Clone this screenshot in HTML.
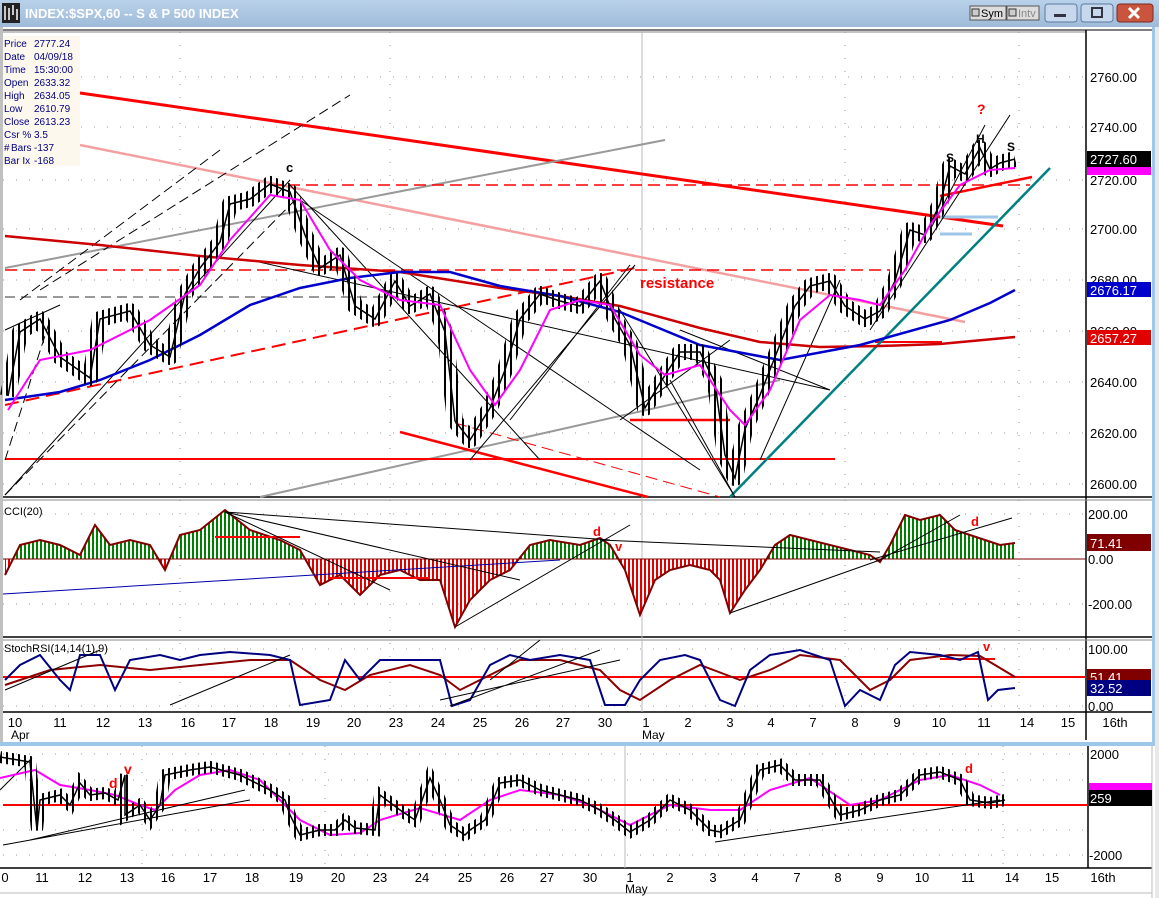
<!DOCTYPE html><html><head><meta charset="utf-8"><style>
body{margin:0;width:1159px;height:898px;overflow:hidden;background:#fff;font-family:"Liberation Sans",sans-serif}
svg{display:block}
</style></head><body>
<svg width="1159" height="898" viewBox="0 0 1159 898" xmlns="http://www.w3.org/2000/svg" font-family="Liberation Sans, sans-serif">
<defs>
<linearGradient id="tb" x1="0" y1="0" x2="0" y2="1"><stop offset="0" stop-color="#b9d1ea"/><stop offset="1" stop-color="#9fbbd9"/></linearGradient>
<pattern id="bars" width="6" height="20" patternUnits="userSpaceOnUse"><rect x="0" y="0" width="2" height="20" fill="#000"/></pattern>
<pattern id="gp" width="4" height="10" patternUnits="userSpaceOnUse"><rect width="2" height="10" fill="#008000"/></pattern>
<pattern id="rp" width="4" height="10" patternUnits="userSpaceOnUse"><rect width="2" height="10" fill="#e00000"/></pattern>
<clipPath id="cAbove"><rect x="0" y="490" width="1086" height="69"/></clipPath>
<clipPath id="cBelow"><rect x="0" y="559" width="1086" height="80"/></clipPath>
</defs>
<rect width="1159" height="898" fill="#fff"/>
<!-- title bar -->
<rect x="0" y="0" width="1159" height="27" fill="url(#tb)"/>
<rect x="2" y="3" width="18" height="20" fill="#222"/><path d="M5 6v14M9 8v12M13 5v10M17 9v11" stroke="#fff" stroke-width="1.5"/>
<text x="25" y="18" font-size="13" font-weight="bold" fill="#fff">INDEX:$SPX,60 -- S &amp; P 500 INDEX</text>
<rect x="970" y="6" width="36" height="14" fill="#ddd" stroke="#555"/><text x="981" y="17" font-size="11">Sym</text><rect x="972" y="9" width="7" height="7" fill="#ccc" stroke="#333"/>
<rect x="1007" y="6" width="32" height="14" fill="#ddd" stroke="#555"/><text x="1018" y="17" font-size="11" fill="#888">Intv</text><rect x="1009" y="9" width="7" height="7" fill="#ccc" stroke="#333"/>
<rect x="1045" y="4" width="32" height="18" rx="3" fill="#c8d8ec" stroke="#5a7aa0"/><rect x="1054" y="14" width="12" height="3" fill="#334"/>
<rect x="1081" y="4" width="32" height="18" rx="3" fill="#c8d8ec" stroke="#5a7aa0"/><rect x="1092" y="8" width="10" height="9" fill="none" stroke="#334" stroke-width="2"/>
<rect x="1117" y="4" width="36" height="18" rx="3" fill="#c9553f" stroke="#7a2a20"/><path d="M1129 8l10 10M1139 8l-10 10" stroke="#fff" stroke-width="3"/>
<!-- frame -->
<rect x="0" y="27" width="3" height="718" fill="#c0c0c0"/>
<rect x="1152" y="27" width="3" height="718" fill="#9ec6e8"/>
<rect x="1155" y="27" width="4" height="871" fill="#e8e8e8"/>
<rect x="0" y="742" width="1155" height="4" fill="#9ec6e8"/>
<line x1="3" y1="30" x2="1152" y2="30" stroke="#000"/><line x1="3" y1="32" x2="1086" y2="32" stroke="#888"/>
<!-- right axis -->
<line x1="1086" y1="30" x2="1086" y2="740" stroke="#000" stroke-width="1.5"/>
<line x1="3" y1="497" x2="1152" y2="497" stroke="#000" stroke-width="1.5"/><line x1="3" y1="500" x2="1152" y2="500" stroke="#888"/>
<line x1="3" y1="637" x2="1152" y2="637" stroke="#000" stroke-width="1.5"/><line x1="3" y1="640" x2="1152" y2="640" stroke="#888"/>
<line x1="3" y1="712" x2="1152" y2="712" stroke="#000" stroke-width="1.5"/>
<!-- grid -->
<g stroke="#999" stroke-dasharray="1,12">
<line x1="3" y1="77" x2="1086" y2="77"/><line x1="3" y1="127" x2="1086" y2="127"/><line x1="3" y1="180" x2="1086" y2="180"/><line x1="3" y1="229" x2="1086" y2="229"/><line x1="3" y1="280" x2="1086" y2="280"/><line x1="3" y1="331" x2="1086" y2="331"/><line x1="3" y1="382" x2="1086" y2="382"/><line x1="3" y1="433" x2="1086" y2="433"/><line x1="3" y1="484" x2="1086" y2="484"/>
<line x1="3" y1="514" x2="1086" y2="514"/><line x1="3" y1="604" x2="1086" y2="604"/><line x1="3" y1="649" x2="1086" y2="649"/><line x1="3" y1="706" x2="1086" y2="706"/>
<line x1="180" y1="32" x2="180" y2="712"/><line x1="390" y1="32" x2="390" y2="712"/><line x1="1019" y1="32" x2="1019" y2="712"/><line x1="845" y1="32" x2="845" y2="712"/>
</g>
<line x1="642" y1="32" x2="642" y2="712" stroke="#bbb"/>
<!-- main panel lines -->
<line x1="80" y1="93" x2="1003" y2="226" stroke="#f00" stroke-width="3"/>
<line x1="80" y1="145" x2="965" y2="322" stroke="#f4a0a0" stroke-width="2.5"/>
<line x1="5" y1="268" x2="665" y2="140" stroke="#999" stroke-width="2"/>
<line x1="260" y1="497" x2="780" y2="380" stroke="#999" stroke-width="2"/>
<line x1="270" y1="185" x2="1030" y2="185" stroke="#f00" stroke-width="1.5" stroke-dasharray="12,6"/>
<line x1="5" y1="270" x2="890" y2="270" stroke="#f00" stroke-width="1.5" stroke-dasharray="12,6"/>
<line x1="5" y1="297" x2="420" y2="297" stroke="#333" stroke-width="1" stroke-dasharray="10,6"/>
<line x1="5" y1="459" x2="835" y2="459" stroke="#f00" stroke-width="2"/>
<line x1="5" y1="405" x2="635" y2="268" stroke="#f00" stroke-width="2" stroke-dasharray="14,7"/>
<line x1="400" y1="432" x2="648" y2="497" stroke="#f00" stroke-width="2.5"/>
<line x1="455" y1="423" x2="720" y2="497" stroke="#f00" stroke-width="1" stroke-dasharray="12,6"/>
<line x1="630" y1="420" x2="730" y2="420" stroke="#f00" stroke-width="2.5"/>
<line x1="875" y1="342" x2="942" y2="342" stroke="#f00" stroke-width="2"/>
<line x1="940" y1="217" x2="998" y2="217" stroke="#9ec6e8" stroke-width="3"/>
<line x1="940" y1="234" x2="972" y2="234" stroke="#9ec6e8" stroke-width="3"/>
<line x1="940" y1="196" x2="1032" y2="177" stroke="#f00" stroke-width="2.5"/>
<line x1="730" y1="497" x2="1050" y2="168" stroke="#008080" stroke-width="2.5"/>
<g stroke="#000" stroke-width="1" fill="none">
<path d="M5 460L50 320M5 495L300 195M20 300L220 150M40 290L350 95" stroke-dasharray="10,5"/>
<path d="M5 495L290 180M5 330L60 305M290 185L540 460M300 200L700 470M250 260L830 390M620 310L735 497M735 497L670 380M470 460L635 265M510 420L630 265M620 420L730 340M760 460L840 280M870 330L1010 115M930 230L985 125M680 330L830 390"/>
</g>
<polyline fill="none" stroke="#c00" stroke-width="2.5" points="5,236 100,245 200,256 300,265 400,272 500,288 560,296 620,306 700,328 760,342 820,347 880,346 940,344 1015,337"/>
<polyline fill="none" stroke="#0000cc" stroke-width="2.5" points="5,400 60,392 100,380 150,360 200,335 250,305 300,288 350,278 400,272 450,272 500,286 560,296 620,312 700,345 780,360 860,345 950,320 990,303 1015,290"/>
<polyline fill="none" stroke="url(#bars)" stroke-width="16" stroke-linejoin="round" points="8,396 20,332 40,319 60,357 90,378 100,319 130,311 150,345 170,357 185,294 200,268 220,242 230,204 250,199 270,184 290,192 305,235 320,268 340,255 355,306 375,319 395,281 410,306 430,294 445,332 455,421 470,440 490,408 505,370 520,319 540,294 560,301 580,306 600,281 615,319 630,345 645,408 660,383 680,352 700,352 715,383 725,455 735,478 745,429 760,395 775,357 795,306 810,286 830,281 845,306 865,319 880,311 895,281 910,230 925,235 940,204 950,166 965,174 980,148 990,169 1000,163 1015,159"/>
<polyline fill="none" stroke="#000" stroke-width="1.5" points="8,396 20,332 40,319 60,357 90,378 100,319 130,311 150,345 170,357 185,294 200,268 220,242 230,204 250,199 270,184 290,192 305,235 320,268 340,255 355,306 375,319 395,281 410,306 430,294 445,332 455,421 470,440 490,408 505,370 520,319 540,294 560,301 580,306 600,281 615,319 630,345 645,408 660,383 680,352 700,352 715,383 725,455 735,478 745,429 760,395 775,357 795,306 810,286 830,281 845,306 865,319 880,311 895,281 910,230 925,235 940,204 950,166 965,174 980,148 990,169 1000,163 1015,159"/>
<polyline fill="none" stroke="#f0f" stroke-width="2" points="8,410 40,360 90,350 150,320 200,285 230,240 270,195 300,200 330,250 360,280 400,300 440,305 470,370 495,405 520,370 550,310 580,300 610,305 640,355 665,375 700,365 730,410 745,425 770,390 800,320 830,295 860,300 880,305 905,270 930,225 960,185 990,170 1015,168"/>
<text x="286" y="172" font-size="13" font-weight="bold">c</text>
<text x="640" y="288" font-size="15" font-weight="bold" fill="#f00">resistance</text>
<text x="977" y="114" font-size="14" font-weight="bold" fill="#f00">?</text>
<text x="976" y="143" font-size="12" font-weight="bold">H</text>
<text x="946" y="162" font-size="12" font-weight="bold">S</text>
<text x="1007" y="151" font-size="12" font-weight="bold">S</text>
<!-- info box -->
<rect x="3" y="36" width="77" height="130" fill="#fdf8ee"/>
<g font-size="10" fill="#000080"><text x="4" y="47">Price</text><text x="34" y="47">2777.24</text><text x="4" y="60">Date</text><text x="34" y="60">04/09/18</text><text x="4" y="73">Time</text><text x="34" y="73">15:30:00</text><text x="4" y="86">Open</text><text x="34" y="86">2633.32</text><text x="4" y="99">High</text><text x="34" y="99">2634.05</text><text x="4" y="112">Low</text><text x="34" y="112">2610.79</text><text x="4" y="125">Close</text><text x="34" y="125">2613.23</text><text x="4" y="138">Csr %</text><text x="34" y="138">3.5</text><text x="4" y="151">#</text><text x="11" y="151">Bars</text><text x="34" y="151">-137</text><text x="4" y="164">Bar Ix</text><text x="34" y="164">-168</text></g>
<!-- price axis labels -->
<g font-size="13"><text x="1090" y="82">2760.00</text><text x="1090" y="132">2740.00</text><text x="1090" y="185">2720.00</text><text x="1090" y="234">2700.00</text><text x="1090" y="285">2680.00</text><text x="1090" y="336">2660.00</text><text x="1090" y="387">2640.00</text><text x="1090" y="438">2620.00</text><text x="1090" y="489">2600.00</text></g>
<rect x="1087" y="166" width="64" height="9" fill="#f0f"/>
<rect x="1087" y="151" width="64" height="16" fill="#000"/><text x="1090" y="164" font-size="13" fill="#fff">2727.60</text>
<rect x="1087" y="282" width="64" height="15" fill="#0000cc"/><text x="1090" y="295" font-size="13" fill="#fff">2676.17</text>
<rect x="1087" y="330" width="64" height="15" fill="#e00000"/><text x="1090" y="343" font-size="13" fill="#fff">2657.27</text>
<!-- CCI -->
<text x="4" y="515" font-size="11">CCI(20)</text>
<g>
<path clip-path="url(#cAbove)" fill="url(#gp)" d="M5 559L5 575 20 545 40 540 60 545 80 555 95 525 110 545 130 540 150 545 165 570 180 535 200 530 225 510 250 530 280 540 300 550 320 585 340 575 360 595 380 575 400 570 420 580 440 580 455 627 470 600 490 580 510 570 530 545 550 540 580 545 600 538 610 545 625 570 640 615 655 580 670 570 690 565 710 570 720 580 730 613 745 590 760 570 775 545 790 535 810 540 830 545 850 550 870 555 880 562 890 545 905 515 920 520 940 515 955 530 970 535 985 540 1000 545 1015 543 1015 559Z"/>
<path clip-path="url(#cBelow)" fill="url(#rp)" d="M5 559L5 575 20 545 40 540 60 545 80 555 95 525 110 545 130 540 150 545 165 570 180 535 200 530 225 510 250 530 280 540 300 550 320 585 340 575 360 595 380 575 400 570 420 580 440 580 455 627 470 600 490 580 510 570 530 545 550 540 580 545 600 538 610 545 625 570 640 615 655 580 670 570 690 565 710 570 720 580 730 613 745 590 760 570 775 545 790 535 810 540 830 545 850 550 870 555 880 562 890 545 905 515 920 520 940 515 955 530 970 535 985 540 1000 545 1015 543 1015 559Z"/>
<polyline fill="none" stroke="#800000" stroke-width="2" points="5,575 20,545 40,540 60,545 80,555 95,525 110,545 130,540 150,545 165,570 180,535 200,530 225,510 250,530 280,540 300,550 320,585 340,575 360,595 380,575 400,570 420,580 440,580 455,627 470,600 490,580 510,570 530,545 550,540 580,545 600,538 610,545 625,570 640,615 655,580 670,570 690,565 710,570 720,580 730,613 745,590 760,570 775,545 790,535 810,540 830,545 850,550 870,555 880,562 890,545 905,515 920,520 940,515 955,530 970,535 985,540 1000,545 1015,543"/>
</g>
<line x1="3" y1="559" x2="1086" y2="559" stroke="#800000"/>
<line x1="3" y1="594" x2="560" y2="560" stroke="#0000aa"/>
<line x1="330" y1="578" x2="430" y2="578" stroke="#f00" stroke-width="2"/>
<line x1="215" y1="537" x2="300" y2="537" stroke="#f00" stroke-width="2"/>
<g stroke="#000" fill="none"><path d="M225 512L610 540M225 512L390 590M225 512L520 580M455 627L630 525M600 540L880 552M730 613L880 560M870 560L1012 518M880 560L960 515"/></g>
<text x="593" y="536" font-size="13" font-weight="bold" fill="#f00">d</text>
<text x="615" y="551" font-size="13" font-weight="bold" fill="#f00">v</text>
<text x="971" y="526" font-size="13" font-weight="bold" fill="#f00">d</text>
<g font-size="13"><text x="1088" y="519">200.00</text><text x="1088" y="564">0.00</text><text x="1088" y="609">-200.00</text></g>
<rect x="1087" y="534" width="64" height="17" fill="#800000"/><text x="1090" y="548" font-size="13" fill="#fff">71.41</text>
<!-- StochRSI -->
<text x="4" y="652" font-size="11">StochRSI(14,14(1),9)</text>
<line x1="3" y1="677" x2="1086" y2="677" stroke="#f00" stroke-width="2"/>
<line x1="940" y1="659" x2="995" y2="659" stroke="#f00" stroke-width="2"/>
<polyline fill="none" stroke="#8b0000" stroke-width="2" points="5,685 50,670 100,665 150,670 200,665 250,660 290,660 320,680 345,690 370,675 410,665 440,675 460,690 490,675 520,660 560,660 600,670 620,690 640,700 670,680 700,665 740,680 770,670 800,655 840,660 870,690 890,680 910,660 950,655 980,656 1000,668 1015,677"/>
<polyline fill="none" stroke="#000080" stroke-width="2" points="5,680 20,665 40,655 60,680 70,690 80,655 100,655 115,690 130,660 160,655 180,660 200,655 230,652 270,655 290,660 300,705 330,700 345,660 360,680 380,660 410,660 440,660 452,706 470,700 490,665 510,655 530,660 560,655 590,660 605,705 625,705 640,680 660,660 685,655 700,660 720,700 735,706 750,670 770,655 800,650 830,660 845,706 860,690 880,700 895,665 910,652 940,655 960,660 978,652 988,700 998,690 1015,688"/>
<g stroke="#000" fill="none"><path d="M5 690L100 650M170 705L290 655M450 706L600 650M440 700L620 660M490 680L540 640"/></g>
<text x="983" y="651" font-size="13" font-weight="bold" fill="#f00">v</text>
<g font-size="13"><text x="1088" y="654">100.00</text><text x="1088" y="711">0.00</text></g>
<rect x="1087" y="669" width="64" height="11" fill="#800000"/><text x="1090" y="682" font-size="13" fill="#fff">51.41</text>
<rect x="1087" y="680" width="64" height="16" fill="#000080"/><text x="1090" y="693" font-size="13" fill="#fff">32.52</text>
<!-- date axis top -->
<g font-size="13" text-anchor="middle"><text x="15" y="727">10</text><text x="60" y="727">11</text><text x="103" y="727">12</text><text x="145" y="727">13</text><text x="188" y="727">16</text><text x="229" y="727">17</text><text x="271" y="727">18</text><text x="313" y="727">19</text><text x="354" y="727">20</text><text x="396" y="727">23</text><text x="438" y="727">24</text><text x="480" y="727">25</text><text x="522" y="727">26</text><text x="563" y="727">27</text><text x="605" y="727">30</text><text x="646" y="727">1</text><text x="688" y="727">2</text><text x="730" y="727">3</text><text x="771" y="727">4</text><text x="813" y="727">7</text><text x="855" y="727">8</text><text x="897" y="727">9</text><text x="939" y="727">10</text><text x="984" y="727">11</text><text x="1027" y="727">14</text><text x="1068" y="727">15</text><text x="1115" y="727">16th</text></g>
<text x="11" y="739" font-size="12">Apr</text><text x="642" y="739" font-size="12">May</text>
<!-- lower window -->
<line x1="1088" y1="746" x2="1088" y2="868" stroke="#000" stroke-width="1.5"/>
<line x1="0" y1="868" x2="1152" y2="868" stroke="#000" stroke-width="1.5"/>
<line x1="1152" y1="746" x2="1152" y2="898" stroke="#bbb"/>
<line x1="0" y1="893" x2="1152" y2="893" stroke="#bbb"/>
<g stroke="#999" stroke-dasharray="1,12"><line x1="3" y1="754" x2="1088" y2="754"/><line x1="3" y1="855" x2="1088" y2="855"/><line x1="3" y1="780" x2="1088" y2="780"/><line x1="3" y1="830" x2="1088" y2="830"/><line x1="142" y1="746" x2="142" y2="868"/><line x1="325" y1="746" x2="325" y2="868"/><line x1="1003" y1="746" x2="1003" y2="868"/></g>
<line x1="625" y1="746" x2="625" y2="868" stroke="#bbb"/>
<line x1="3" y1="805" x2="1088" y2="805" stroke="#f00" stroke-width="2"/>
<g stroke="#000" fill="none"><path d="M3 845L250 800M30 840L245 790M715 842L1000 800M0 790L32 758"/></g>
<polyline fill="none" stroke="#f0f" stroke-width="2" points="0,778 35,770 60,785 90,790 115,795 140,805 155,810 175,790 200,775 230,770 260,780 280,800 300,820 330,835 360,833 380,820 420,808 460,820 490,800 520,790 560,795 590,805 630,825 670,805 710,810 740,810 770,790 810,778 850,805 880,800 920,780 950,775 980,785 1000,795"/>
<polyline fill="none" stroke="url(#bars)" stroke-width="12" points="0,757 30,762 37,830 40,800 60,795 70,805 80,783 90,795 105,793 118,800 125,775 125,815 140,805 150,820 160,805 165,775 190,770 210,767 240,775 270,790 285,800 290,815 300,835 320,830 335,830 345,820 355,828 375,830 380,795 400,810 415,820 430,778 440,800 450,825 465,835 470,830 485,820 500,783 520,780 540,790 560,795 580,800 600,810 615,820 630,832 650,820 670,800 690,810 710,830 720,832 740,820 760,770 780,765 795,780 820,780 840,815 860,810 880,800 900,795 920,775 940,772 960,780 970,800 990,803 1005,800"/>
<polyline fill="none" stroke="#000" stroke-width="1.5" points="0,757 30,762 37,830 40,800 60,795 70,805 80,783 90,795 105,793 118,800 125,775 125,815 140,805 150,820 160,805 165,775 190,770 210,767 240,775 270,790 285,800 290,815 300,835 320,830 335,830 345,820 355,828 375,830 380,795 400,810 415,820 430,778 440,800 450,825 465,835 470,830 485,820 500,783 520,780 540,790 560,795 580,800 600,810 615,820 630,832 650,820 670,800 690,810 710,830 720,832 740,820 760,770 780,765 795,780 820,780 840,815 860,810 880,800 900,795 920,775 940,772 960,780 970,800 990,803 1005,800"/>
<text x="109" y="788" font-size="14" font-weight="bold" fill="#f00">d</text>
<text x="124" y="774" font-size="14" font-weight="bold" fill="#f00">v</text>
<text x="965" y="773" font-size="13" font-weight="bold" fill="#f00">d</text>
<g font-size="13"><text x="1090" y="759">2000</text><text x="1089" y="860">-2000</text></g>
<rect x="1089" y="783" width="63" height="9" fill="#f0f"/>
<rect x="1089" y="790" width="63" height="16" fill="#000"/><text x="1090" y="803" font-size="13" fill="#fff">259</text>
<g font-size="13" text-anchor="middle"><text x="5" y="882">0</text><text x="42" y="882">11</text><text x="85" y="882">12</text><text x="127" y="882">13</text><text x="168" y="882">16</text><text x="210" y="882">17</text><text x="252" y="882">18</text><text x="296" y="882">19</text><text x="338" y="882">20</text><text x="380" y="882">23</text><text x="422" y="882">24</text><text x="465" y="882">25</text><text x="507" y="882">26</text><text x="547" y="882">27</text><text x="590" y="882">30</text><text x="630" y="882">1</text><text x="670" y="882">2</text><text x="713" y="882">3</text><text x="755" y="882">4</text><text x="797" y="882">7</text><text x="838" y="882">8</text><text x="880" y="882">9</text><text x="922" y="882">10</text><text x="968" y="882">11</text><text x="1012" y="882">14</text><text x="1052" y="882">15</text><text x="1103" y="882">16th</text></g>
<text x="625" y="893" font-size="12">May</text>
</svg>
</body></html>
